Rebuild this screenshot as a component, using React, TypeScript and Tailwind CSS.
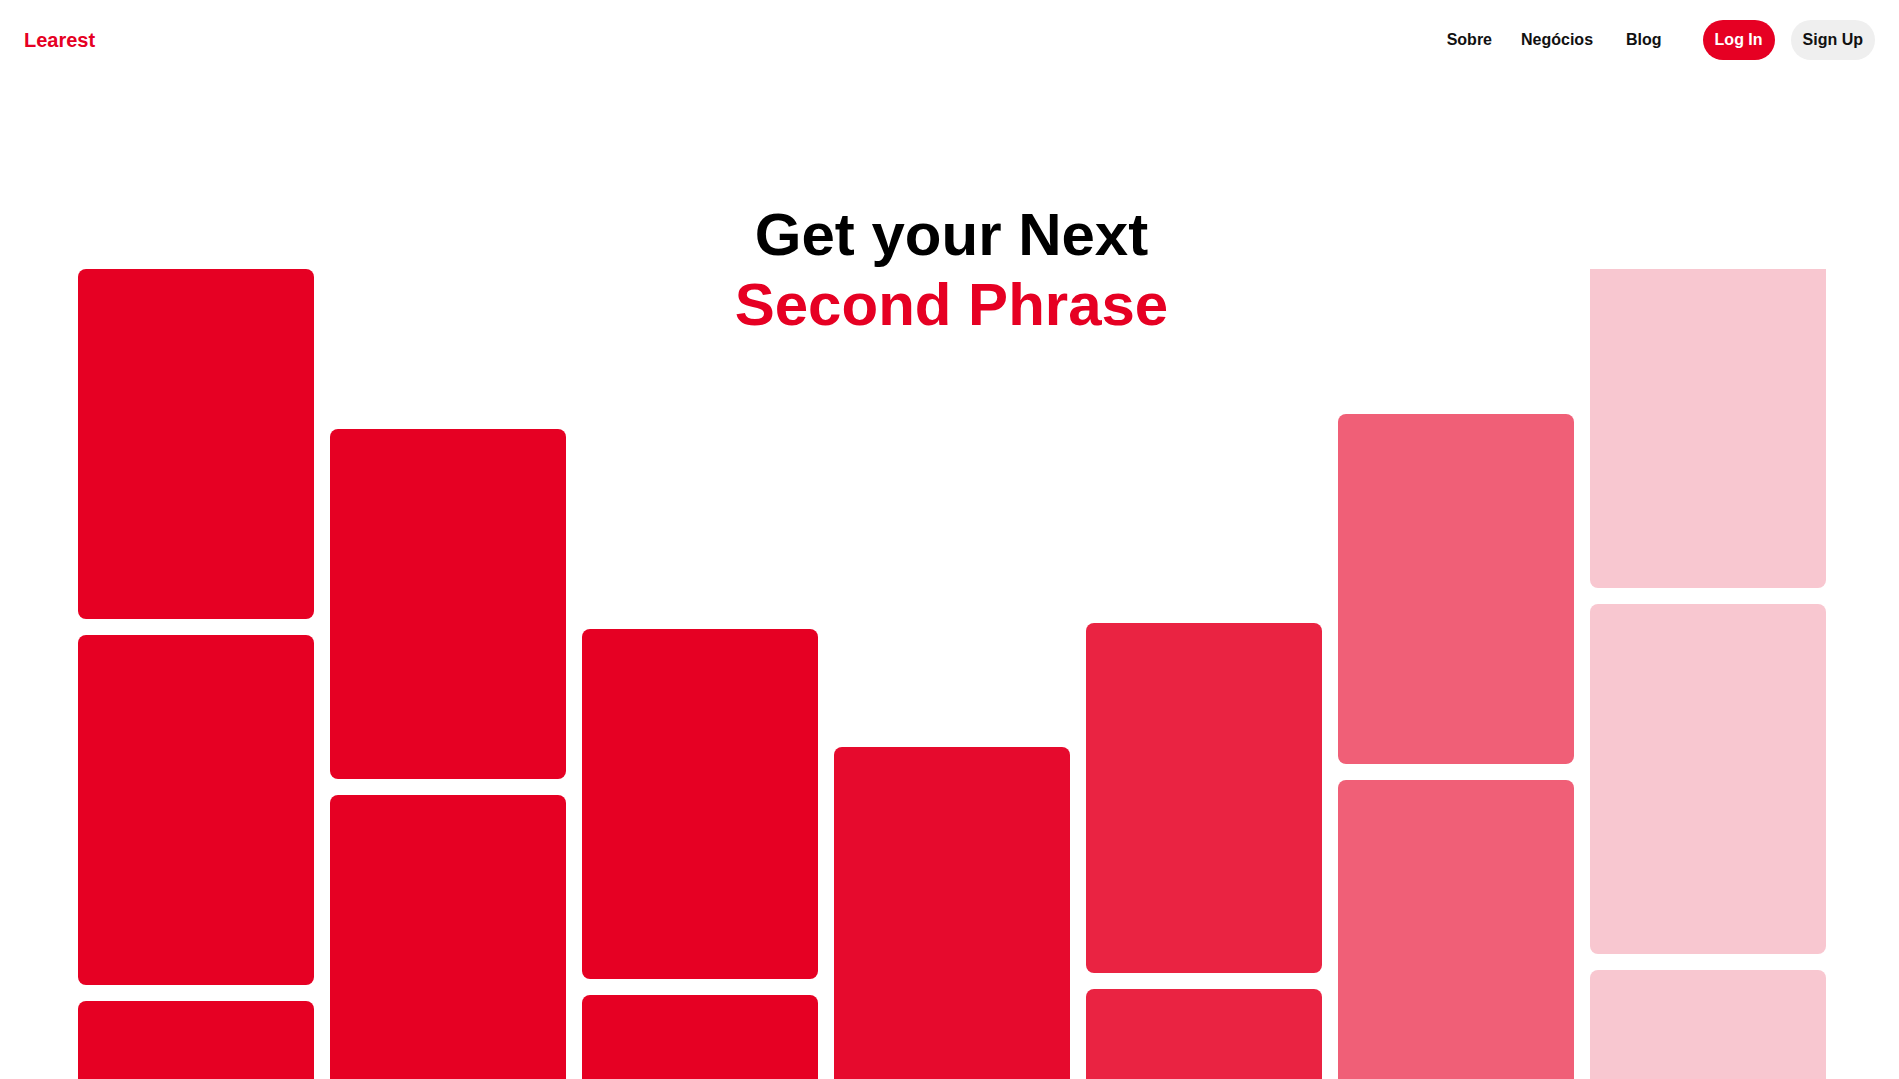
import React from "react";

type Col = { offset: string; color: string };

const columns: Col[] = [
  { offset: "mt-0", color: "bg-[#e60023]" },
  { offset: "mt-[160px]", color: "bg-[#e60023]" },
  { offset: "mt-[360px]", color: "bg-[#e60023]" },
  { offset: "mt-[478px]", color: "bg-[#e60a2d]" },
  { offset: "mt-[354px]", color: "bg-[#ea2342]" },
  { offset: "mt-[145px]", color: "bg-[#f05f77]" },
  { offset: "-mt-[31px]", color: "bg-[#f8c7d0]" },
];

export default function App() {
  return (
    <div
      className="h-[1079px] w-full overflow-hidden bg-white"
      style={{ fontFamily: '"Liberation Sans", Arial, sans-serif' }}
    >
      <header className="flex h-20 items-center justify-between pl-6 pr-6">
        <div className="text-[20px] font-bold text-[#e60023]">Learest</div>
        <nav className="flex items-center">
          <div className="flex items-center text-[16px] font-bold text-[#111111]">
            <span>Sobre</span>
            <span className="ml-[29px]">Negócios</span>
            <span className="ml-[33px]">Blog</span>
          </div>
          <button className="ml-[41px] flex h-10 items-center rounded-full bg-[#e60023] px-3 text-[16px] font-bold text-white">
            Log In
          </button>
          <button className="ml-4 flex h-10 items-center rounded-full bg-[#efefef] px-3 text-[16px] font-bold text-[#111111]">
            Sign Up
          </button>
        </nav>
      </header>

      <section className="relative pt-[120px]">
        <h1 className="relative z-10 pl-1 text-center text-[60px] font-bold leading-[70px]">
          <span className="block text-black">Get your Next</span>
          <span className="block text-[#e60023]">Second Phrase</span>
        </h1>
        <div className="-mt-[71px] flex h-[810px] gap-4 overflow-hidden pl-[78px]">
          {columns.map((c, i) => (
            <div key={i} className={`flex w-[236px] shrink-0 flex-col gap-4 ${c.offset}`}>
              {[0, 1, 2].map((j) => (
                <div key={j} className={`h-[350px] w-[236px] shrink-0 rounded-[8px] ${c.color}`} />
              ))}
            </div>
          ))}
        </div>
      </section>
    </div>
  );
}
